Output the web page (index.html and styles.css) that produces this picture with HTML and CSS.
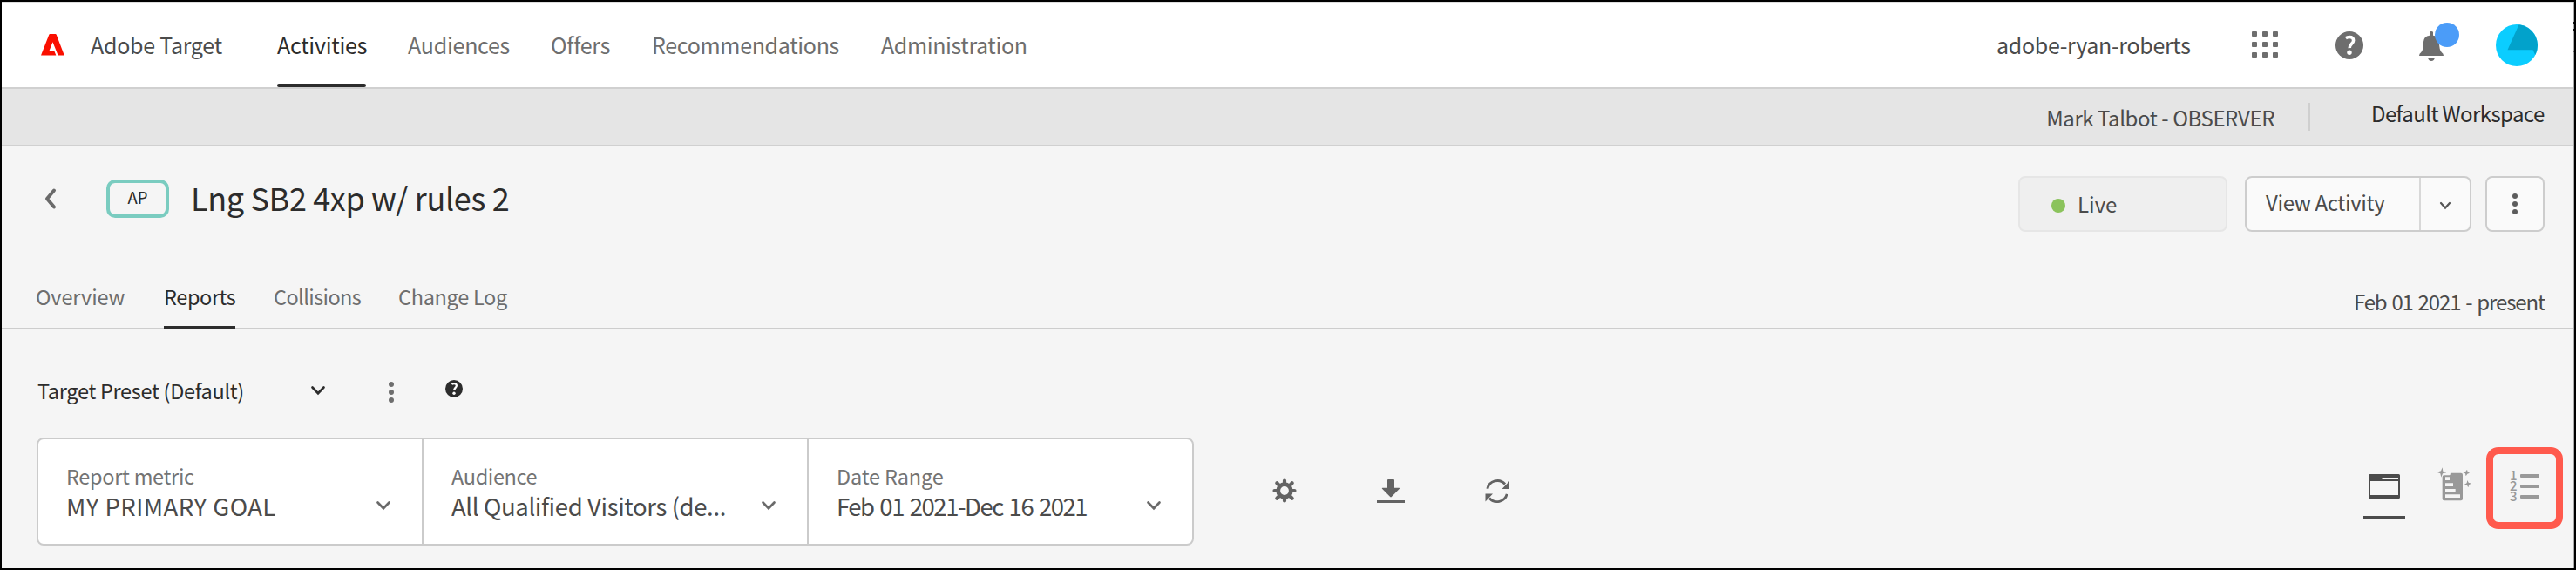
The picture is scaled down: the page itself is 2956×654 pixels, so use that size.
FILE: index.html
```html
<!DOCTYPE html>
<html lang="en">
<head>
<meta charset="utf-8">
<title>Adobe Target</title>
<link rel="stylesheet" href="styles.css">
</head>
<body>
<div class="frame">
  <header class="topbar">
    <svg class="logo" width="27" height="25" viewBox="0 0 27 25"><path fill="#fa0f00" d="M10.300 0h6.400q.7 0 1 .7L26.800 24.500h-7.200L13.500 9.300 9.600 19h5q.5 0 .7.500l2 5H0L9.300.700q.3-.7 1-.7z"/></svg>
    <span class="brand">Adobe Target</span>
    <nav class="mainnav">
      <a class="nav-activities active">Activities</a>
      <a class="nav-audiences">Audiences</a>
      <a class="nav-offers">Offers</a>
      <a class="nav-recs">Recommendations</a>
      <a class="nav-admin">Administration</a>
    </nav>
    <div class="account">
      <span class="org">adobe-ryan-roberts</span>
      <svg class="apps" width="30" height="30" viewBox="0 0 30 30" fill="#6e6e6e"><rect width="6" height="6" rx="1"/><rect x="12" width="6" height="6" rx="1"/><rect x="24" width="6" height="6" rx="1"/><rect y="12" width="6" height="6" rx="1"/><rect x="12" y="12" width="6" height="6" rx="1"/><rect x="24" y="12" width="6" height="6" rx="1"/><rect y="24" width="6" height="6" rx="1"/><rect x="12" y="24" width="6" height="6" rx="1"/><rect x="24" y="24" width="6" height="6" rx="1"/></svg>
      <svg class="help" width="32" height="32" viewBox="0 0 32 32"><circle cx="16" cy="16" r="16" fill="#6e6e6e"/><path d="M11.8 7.800c1.200-.9 2.700-1.300 4.200-1.300 2.800 0 4.600 1.500 4.600 3.900 0 3.700-4.600 4.200-4.400 8.700" fill="none" stroke="#fff" stroke-width="3.600"/><circle cx="16" cy="24.300" r="2.700" fill="#fff"/></svg>
      <svg class="bell" width="46" height="45" viewBox="18 48 138 135"><path fill="#6e6e6e" d="M54 92V82q0-4 6-4t6 4v10q20 3 21 22 0 28 8 36 7 5 7 12H18q0-7 7-12 8-8 8-36 1-19 21-22zM48 168h24q-2 12-12 12t-12-12z"/><circle cx="114" cy="90" r="42" fill="#4b9cf8"/></svg>
      <svg class="avatar" width="48" height="48" viewBox="0 0 48 48"><circle cx="24" cy="24" r="24" fill="#0bcdff"/><path fill="#02a2cb" d="M26.500 0.200A24 24 0 0 1 45.300 35L42.500 29.300H13.500z"/></svg>
    </div>
  </header>

  <div class="workspace-bar">
    <span class="user">Mark Talbot - OBSERVER</span>
    <span class="divider"></span>
    <span class="workspace">Default Workspace</span>
  </div>

  <section class="title-row">
    <div class="title-group">
      <svg class="back" width="16" height="26" viewBox="0 0 16 26"><path d="M13 3.500 5 13l8 9.500" fill="none" stroke="#6a6a6a" stroke-width="4" stroke-linecap="round" stroke-linejoin="round"/></svg>
      <span class="type-badge">AP</span>
      <h1>Lng SB2 4xp w/ rules 2</h1>
    </div>
    <div class="actions">
      <div class="status"><i></i><span>Live</span></div>
      <div class="split-button">
        <span class="view">View Activity</span>
        <span class="drop"><svg width="14" height="10" viewBox="0 0 14 10"><path d="M2 2l5 5.500L12 2" fill="none" stroke="#555" stroke-width="2.200" stroke-linecap="round"/></svg></span>
      </div>
      <div class="more-button"><svg width="6" height="24" viewBox="0 0 6 24" fill="#5c5c5c"><circle cx="3" cy="3" r="3"/><circle cx="3" cy="12" r="3"/><circle cx="3" cy="21" r="3"/></svg></div>
    </div>
  </section>

  <div class="tabs">
    <a class="tab-overview">Overview</a>
    <a class="tab-reports active">Reports</a>
    <a class="tab-collisions">Collisions</a>
    <a class="tab-log">Change Log</a>
    <span class="run-dates">Feb 01 2021 - present</span>
  </div>

  <div class="preset">
    <span class="preset-name">Target Preset (Default)</span>
    <svg class="preset-chevron" width="18" height="12" viewBox="0 0 18 12"><path d="M2.500 2.500 9 9.200l6.500-6.700" fill="none" stroke="#2c2c2c" stroke-width="2.700" stroke-linecap="round"/></svg>
    <svg class="preset-more" width="6" height="24" viewBox="0 0 6 24" fill="#6e6e6e"><circle cx="3" cy="3" r="3"/><circle cx="3" cy="12" r="3"/><circle cx="3" cy="21" r="3"/></svg>
    <svg class="preset-help" width="20" height="20" viewBox="0 0 32 32"><circle cx="16" cy="16" r="16" fill="#2c2c2c"/><path d="M11.800 7.800c1.200-.9 2.700-1.300 4.200-1.300 2.800 0 4.600 1.500 4.600 3.900 0 3.700-4.600 4.200-4.400 8.700" fill="none" stroke="#fff" stroke-width="3.600"/><circle cx="16" cy="24.300" r="2.700" fill="#fff"/></svg>
  </div>

  <div class="report-row">
    <div class="filters">
      <div class="filter">
        <div><p class="label l-metric">Report metric</p><p class="value v-metric">MY PRIMARY GOAL</p></div>
        <svg width="18" height="12" viewBox="0 0 18 12"><path d="M2.500 2.500 9 9.200l6.500-6.700" fill="none" stroke="#6a6a6a" stroke-width="2.700" stroke-linecap="round"/></svg>
      </div>
      <div class="filter">
        <div><p class="label l-audience">Audience</p><p class="value v-audience">All Qualified Visitors (de...</p></div>
        <svg width="18" height="12" viewBox="0 0 18 12"><path d="M2.500 2.500 9 9.200l6.500-6.700" fill="none" stroke="#6a6a6a" stroke-width="2.700" stroke-linecap="round"/></svg>
      </div>
      <div class="filter">
        <div><p class="label l-date">Date Range</p><p class="value v-date">Feb 01 2021-Dec 16 2021</p></div>
        <svg width="18" height="12" viewBox="0 0 18 12"><path d="M2.500 2.500 9 9.200l6.500-6.700" fill="none" stroke="#6a6a6a" stroke-width="2.700" stroke-linecap="round"/></svg>
      </div>
    </div>

    <div class="tools">
      <svg width="32" height="32" viewBox="-16 -16 32 32"><circle r="7.300" fill="none" stroke="#636363" stroke-width="4.800"/><path d="M0-9V-11.500M0 9V11.500M-9 0H-11.500M9 0H11.500M6.500-6.500 8.700-8.700M-6.500-6.500-8.700-8.700M6.500 6.500 8.700 8.700M-6.500 6.500-8.700 8.700" stroke="#636363" stroke-width="4.200" stroke-linecap="round"/></svg>
      <svg width="32" height="32" viewBox="0 0 32 32" fill="#636363"><path d="M12 4q0-1 1-1h6q1 0 1 1v8.700h5.300q1.400 0 .6 1L16.800 23q-.8.800-1.600 0L6 13.700q-.8-1 .6-1H12zM0 27h32v3H0z"/></svg>
      <svg width="32" height="32" viewBox="0 0 32 32"><path d="M4.800 13.800A11.700 11.700 0 0 1 25 8.500M27.200 19.800A11.700 11.700 0 0 1 7 24.500" fill="none" stroke="#636363" stroke-width="2.800"/><path fill="#636363" d="M30 5v9h-8.500zM2.500 19.500h8.500L2.500 28.500z"/></svg>
    </div>

    <div class="views">
      <div class="view-table"><svg width="36" height="28" viewBox="0 0 36 28"><path fill="#4b4b4b" fill-rule="evenodd" d="M1.500 0h33Q36 0 36 1.500v25Q36 28 34.500 28h-33Q0 28 0 26.500v-25Q0 0 1.500 0zM2 8v16h32V8zM15.500 4v2H34V4z"/></svg></div>
      <svg class="view-auto" width="40" height="42" viewBox="18 12 120 126"><path fill="#999" d="M38 52q0-6 6-6h17q5 0 5-8h36q6 0 6 6v83q0 6-6 6H44q-6 0-6-6z"/><path fill="#f5f5f5" d="M48 52h15v11H48zM48 73h27v11H48zM48 93h35v10H48zM48 112h51v11H48z"/><path fill="#999" d="M38 19l2 13 12 5-13 3-5 13-3-13-12-5 14-4zM123 26l2 8 7 4-8 3-5 8-2-9-8-4 9-3zM124 63l4 8 10 3-8 4-3 10-4-8-9-3 8-4z"/></svg>
      <div class="view-list">
        <div class="nums"><span>1</span><span>2</span><span>3</span></div>
        <div class="lines"><i></i><i></i><i></i></div>
      </div>
    </div>
  </div>
</div>
</body>
</html>
```
FILE: styles.css
```css
* { box-sizing: border-box; }
body, h1, p { margin: 0; }
body { font-family: "Noto Sans CJK JP", sans-serif; color: #4b4b4b; }
svg { display: block; flex: none; }

.frame {
  width: 2956px;
  height: 654px;
  border: 2px solid #000;
  padding-right: 2px;
  overflow: hidden;
  white-space: nowrap;
  background:
    linear-gradient(#111, #111) right 0 top 23px / 2px 2px no-repeat,
    linear-gradient(#111, #111) right 0 top 31px / 2px 2px no-repeat,
    linear-gradient(#666, #666) right 0 top 56px / 2px 2px no-repeat,
    linear-gradient(#aaa, #aaa) right 0 top 0 / 2px 100% no-repeat,
    #f5f5f5;
}

/* Top navigation */
.topbar {
  display: flex;
  align-items: center;
  height: 100px;
  padding: 0 40px 0 45px;
  background: #fff;
  border-top: 2px solid #ddd;
  border-bottom: 2px solid #d0d0d0;
  font-size: 25px;
  letter-spacing: -.26px;
}
.logo { margin-bottom: 1px; }
.brand, .org { padding-bottom: 2px; }
.brand { margin-left: 30px; width: 153px; }
.mainnav { display: flex; gap: 48px; height: 96px; margin-left: 61px; color: #6e6e6e; }
.mainnav a { line-height: 94px; height: 96px; }
.mainnav .active { color: #2c2c2c; position: relative; }
.mainnav .active::after {
  content: ""; position: absolute; left: 0; right: 0; bottom: 0;
  height: 4px; border-radius: 2px; background: #2c2c2c;
}
.nav-activities { width: 102px; }
.nav-audiences { width: 116px; }
.nav-offers { width: 68px; }
.nav-recs { width: 215px; letter-spacing: -.32px; }
.nav-admin { letter-spacing: -.38px; }
.account { display: flex; align-items: center; margin-left: auto; }
.org { width: 223px; margin-right: 70px; letter-spacing: -.32px; }
.apps { margin: 0 66px 2px 0; }
.help { margin-right: 64px; }
.bell { margin: 0 42px 7px 0; }

/* Workspace strip */
.workspace-bar {
  display: flex;
  align-items: center;
  justify-content: flex-end;
  height: 66px;
  padding-right: 31px;
  background: #e5e5e5;
  border-bottom: 2px solid #d0d0d0;
  font-size: 24px;
}
.user { padding-top: 1px; letter-spacing: -.42px; }
.divider { width: 2px; height: 32px; margin: 0 70px 0 39px; background: #cfcfcf; }
.workspace { width: 200px; padding-bottom: 9px; color: #2c2c2c; letter-spacing: -.6px; }

/* Activity title */
.title-row {
  display: flex;
  justify-content: space-between;
  height: 134px;
  padding: 34px 32px 0 47px;
}
.title-group { display: flex; align-items: center; height: 52px; }
.back { margin-right: 57px; }
.type-badge {
  width: 72px; height: 44px; margin-right: 25px;
  border: 4px solid #7accc0; border-radius: 10px;
  font-size: 18.5px; line-height: 32px; text-align: center; color: #2c2c2c;
}
h1 { font-size: 36px; font-weight: 400; line-height: 48px; padding-bottom: 4px; letter-spacing: -.35px; color: #2c2c2c; }
.actions { display: flex; height: 64px; }
.status {
  display: flex; align-items: center; width: 240px; margin-right: 20px; padding-left: 36px;
  border: 2px solid #e6e6e6; border-radius: 8px; background: #efefef; font-size: 24px;
}
.status i { width: 16px; height: 16px; margin: 4px 14px 0 0; border-radius: 50%; background: #8bc35c; }
.status span { padding-bottom: 1px; }
.split-button {
  display: flex; width: 260px; margin-right: 16px;
  border: 2px solid #cdcdcd; border-radius: 8px; background: #fafafa;
}
.view { width: 198px; padding-left: 22px; font-size: 24px; line-height: 56px; letter-spacing: -.38px; }
.drop { flex: 1; display: flex; align-items: center; justify-content: center; padding-top: 3px; border-left: 2px solid #d8d8d8; }
.more-button {
  display: flex; align-items: center; justify-content: center; width: 68px;
  padding-bottom: 1px;
  border: 2px solid #cdcdcd; border-radius: 8px; background: #fafafa;
}

/* Tabs */
.tabs {
  display: flex;
  gap: 44px;
  height: 76px;
  padding: 0 32px 0 39px;
  font-size: 23.5px;
  line-height: 76px;
  color: #6e6e6e;
  box-shadow: inset 0 -2px #cdcdcd;
}
.tabs .active { color: #2c2c2c; box-shadow: inset 0 -4px #2c2c2c; }
.tab-overview { width: 103px; letter-spacing: -.1px; }
.tab-reports { width: 82px; letter-spacing: -.4px; }
.tab-collisions { width: 99px; letter-spacing: -.58px; }
.tab-log { letter-spacing: -.3px; }
.run-dates { margin-left: auto; font-size: 24px; line-height: 88px; letter-spacing: -1.1px; word-spacing: 1.500px; color: #4b4b4b; }

/* Preset selector */
.preset { display: flex; align-items: center; height: 44px; margin: 48px 0 32px 41px; }
.preset-name { width: 240px; font-size: 23.5px; letter-spacing: -.3px; color: #2c2c2c; }
.preset-chevron { margin-left: 73px; }
.preset-more { margin: 4px 0 0 72px; }
.preset-help { margin: 0 0 4px 59px; }

/* Report filters and tools */
.report-row { display: flex; align-items: flex-start; padding: 0 11px 0 40px; }
.filters {
  display: flex; width: 1328px; height: 124px;
  border: 2px solid #cbcbcb; border-radius: 8px; background: #fff;
}
.filter { display: flex; justify-content: space-between; width: 442px; padding: 26px 35px 0 32px; border-right: 2px solid #cbcbcb; }
.filter:last-child { width: 440px; border-right: 0; }
.filter svg { margin-top: 44px; }
.label { font-size: 23.5px; line-height: 32px; color: #747474; }
.value { font-size: 27.5px; line-height: 36px; }
.l-metric { letter-spacing: -.3px; }
.l-audience { letter-spacing: -.37px; }
.l-date { letter-spacing: -.15px; }
.v-metric { letter-spacing: .45px; }
.v-audience { letter-spacing: -.38px; }
.v-date { letter-spacing: -1.45px; word-spacing: 2px; }
.tools { display: flex; gap: 90px; margin: 45px 0 0 88px; }

.views { display: flex; margin: 11px 0 0 auto; }
.view-table { width: 48px; height: 52px; margin: 31px 36px 0 0; padding-left: 6px; border-bottom: 4px solid #4b4b4b; }
.view-auto { margin: 21px 17px 0 0; }
.view-list {
  display: flex; width: 88px; height: 94px; padding: 18px 0 0 19px;
  border: 8px solid #ff5a4d; border-radius: 14px;
}
.nums { width: 12px; font-size: 15px; font-weight: 500; line-height: 12px; color: #999; }
.nums span { display: block; }
.lines { display: grid; align-content: start; gap: 8px; padding-top: 5px; }
.lines i { width: 22px; height: 4px; border-radius: 1px; background: #999; }
```
